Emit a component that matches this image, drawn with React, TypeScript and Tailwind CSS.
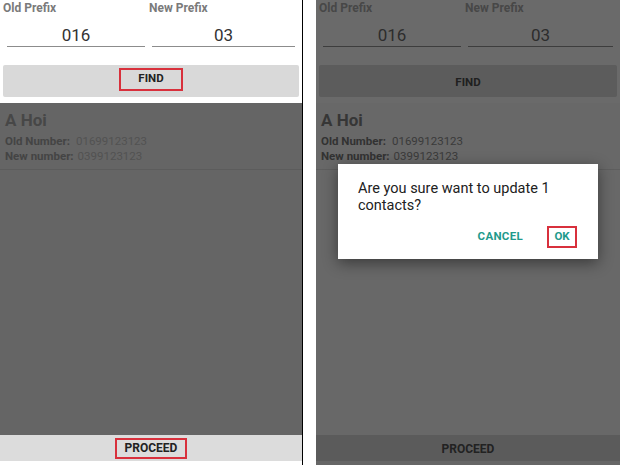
import clsx from "clsx";

type Tone = "light" | "dim";

// colour set for each phone screen; the right one sits behind the dialog scrim
const tones = {
  light: {
    top: "bg-white",
    label: "text-[#7a7a7a]",
    value: "text-[#333333]",
    line: "border-[#8c8c8c]",
    button: "bg-[#d9d9d9]",
    buttonText: "text-[#222222]",
    list: "bg-[#656565]",
    name: "text-[#474747]",
    detailLabel: "text-[#444444]",
    detailValue: "text-[#525252]",
    divider: "border-[#5c5c5c]",
    bar: "bg-[#dcdcdc]",
    barText: "text-[#222222]",
    foot: "bg-white",
  },
  dim: {
    top: "bg-[#6a6a6a]",
    label: "text-[#474747]",
    value: "text-[#2d2d2d]",
    line: "border-[#3d3d3d]",
    button: "bg-[#5c5c5c]",
    buttonText: "text-[#202020]",
    list: "bg-[#686868]",
    name: "text-[#363636]",
    detailLabel: "text-[#323232]",
    detailValue: "text-[#3a3a3a]",
    divider: "border-[#5e5e5e]",
    bar: "bg-[#5b5b5b]",
    barText: "text-[#222222]",
    foot: "bg-[#666666]",
  },
};

const fields = [
  { label: "Old Prefix", value: "016", line: "ml-[4px] mr-[4px]" },
  { label: "New Prefix", value: "03", line: "ml-[3px] mr-[4px]" },
];

function Marked({ show, className, children }: { show: boolean; className: string; children: React.ReactNode }) {
  if (!show) return <span>{children}</span>;
  return (
    <span className={clsx("flex items-center justify-center border-2 border-[#d8303c]", className)}>
      {children}
    </span>
  );
}

interface ScreenProps {
  tone: Tone;
  marked?: boolean;
  className?: string;
  children?: React.ReactNode;
}

function Screen({ tone, marked = false, className, children }: ScreenProps) {
  const t = tones[tone];

  return (
    <div className={clsx("relative flex h-[465px] shrink-0 flex-col overflow-hidden", t.top, className)}>
      <div className="grid grid-cols-[146px_1fr] px-[3px]">
        {fields.map((f) => (
          <div key={f.label}>
            <div className={clsx("h-[16px] text-[12px] font-bold leading-[16px]", t.label)}>{f.label}</div>
            <div
              className={clsx(
                "h-[31px] border-b pt-[9px] text-center text-[17px] leading-[20px]",
                f.line,
                t.line,
                t.value
              )}
            >
              {f.value}
            </div>
          </div>
        ))}
      </div>

      <div className={clsx("mx-[3px] mt-[18px] flex h-[32px] items-center justify-center rounded-[2px]", t.button)}>
        <Marked show={marked} className="-mt-[4px] h-[23px] w-[64px]">
          <span className={clsx("text-[11.5px] font-bold", t.buttonText)}>FIND</span>
        </Marked>
      </div>

      <div className={clsx("mt-[6px] flex-1", t.list)}>
        <div className={clsx("border-b px-[5px] pb-[5px] pt-[6px]", t.divider)}>
          <div className={clsx("text-[17px] font-bold leading-[22px]", t.name)}>A Hoi</div>
          <div className="mt-[3px] text-[11.5px] leading-[15px]">
            <div>
              <span className={clsx("font-bold", t.detailLabel)}>Old Number:</span>
              <span className={clsx("ml-[6px]", t.detailValue)}>01699123123</span>
            </div>
            <div>
              <span className={clsx("font-bold", t.detailLabel)}>New number:</span>
              <span className={clsx("ml-[4px]", t.detailValue)}>0399123123</span>
            </div>
          </div>
        </div>
      </div>

      <div className={clsx("flex h-[26px] items-center justify-center", t.bar)}>
        <Marked show={marked} className="h-[21px] w-[72px]">
          <span className={clsx("text-[12px] font-bold", t.barText)}>PROCEED</span>
        </Marked>
      </div>
      <div className={clsx("h-[4px]", t.foot)} />

      {children}
    </div>
  );
}

function ConfirmDialog() {
  return (
    <div className="absolute left-[22px] top-[164px] h-[95px] w-[260px] bg-white shadow-[0_4px_14px_rgba(0,0,0,0.45)]">
      <p className="px-[20px] pt-[16px] text-[14.5px] leading-[17px] text-[#212121]">
        Are you sure want to update 1 contacts?
      </p>
      <div className="mt-[12px] flex items-center justify-end gap-[24px] pr-[21px]">
        <span className="text-[11.5px] font-bold tracking-[0.3px] text-[#1f9a8c]">CANCEL</span>
        <span className="flex h-[22px] w-[30px] items-center justify-center border-2 border-[#d8303c] text-[11.5px] font-bold text-[#1f9a8c]">
          OK
        </span>
      </div>
    </div>
  );
}

export default function App() {
  return (
    <div className="flex h-[465px] w-[620px] overflow-hidden bg-white font-['Roboto',sans-serif]">
      <Screen tone="light" marked className="w-[303px] border-r border-black" />
      <div className="w-[13px] shrink-0" />
      <Screen tone="dim" className="w-[304px]">
        <ConfirmDialog />
      </Screen>
    </div>
  );
}
